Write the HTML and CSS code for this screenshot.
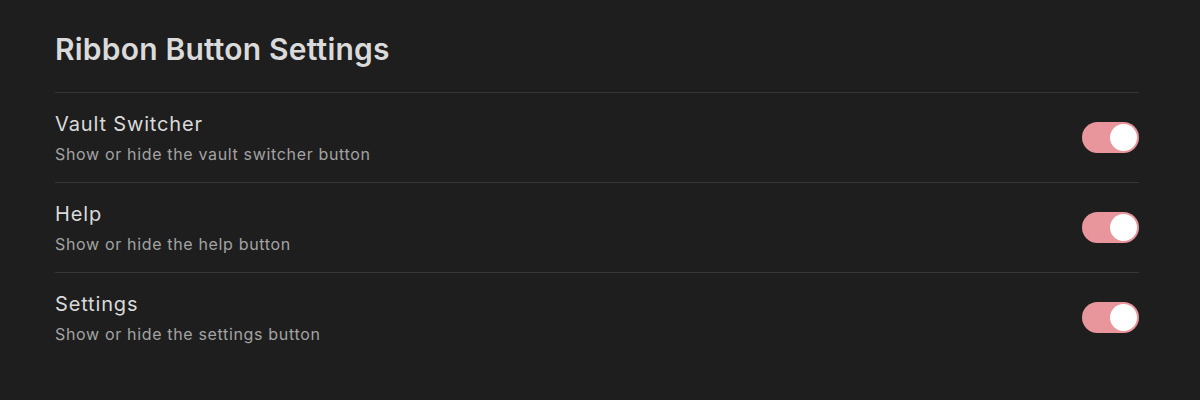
FILE: index.html
```html
<!DOCTYPE html>
<html>
<head>
<meta charset="utf-8">
<link rel="stylesheet" href="styles.css">
</head>
<body>
<div class="page">
  <h2 class="title">Ribbon Button Settings</h2>
  <div class="item">
    <div class="info">
      <div class="name">Vault Switcher</div>
      <div class="desc">Show or hide the vault switcher button</div>
    </div>
    <div class="toggle on"><div class="knob"></div></div>
  </div>
  <div class="item">
    <div class="info">
      <div class="name">Help</div>
      <div class="desc">Show or hide the help button</div>
    </div>
    <div class="toggle on"><div class="knob"></div></div>
  </div>
  <div class="item">
    <div class="info">
      <div class="name">Settings</div>
      <div class="desc">Show or hide the settings button</div>
    </div>
    <div class="toggle on"><div class="knob"></div></div>
  </div>
</div>
</body>
</html>
```

FILE: styles.css
```css
html, body {
  margin: 0;
  padding: 0;
  background: #1e1e1e;
  height: 100%;
}
body {
  font-family: Inter, "Noto Sans", sans-serif;
  color: #dadada;
}
.page {
  width: 1084px;
  padding: 31px 0 0 55px;
}
.title {
  margin: 0;
  font-size: 30px;
  font-weight: 600;
  line-height: 36px;
  letter-spacing: 0.2px;
  padding-bottom: 25px;
  color: #dadada;
}
.item {
  display: flex;
  align-items: center;
  justify-content: space-between;
  height: 89px;
  border-top: 1px solid #363636;
}
.info {
  margin-top: 2px;
}
.name {
  font-size: 20px;
  line-height: 30px;
  letter-spacing: 0.85px;
  color: #dadada;
}
.desc {
  font-size: 16px;
  line-height: 30px;
  letter-spacing: 0.66px;
  color: #a3a3a3;
}
.toggle {
  width: 57px;
  height: 31px;
  border-radius: 16px;
  background: #e8959c;
  display: flex;
  align-items: center;
  justify-content: flex-end;
  padding: 0 2px;
  box-sizing: border-box;
}
.knob {
  width: 27px;
  height: 27px;
  border-radius: 50%;
  background: #ffffff;
}
```
